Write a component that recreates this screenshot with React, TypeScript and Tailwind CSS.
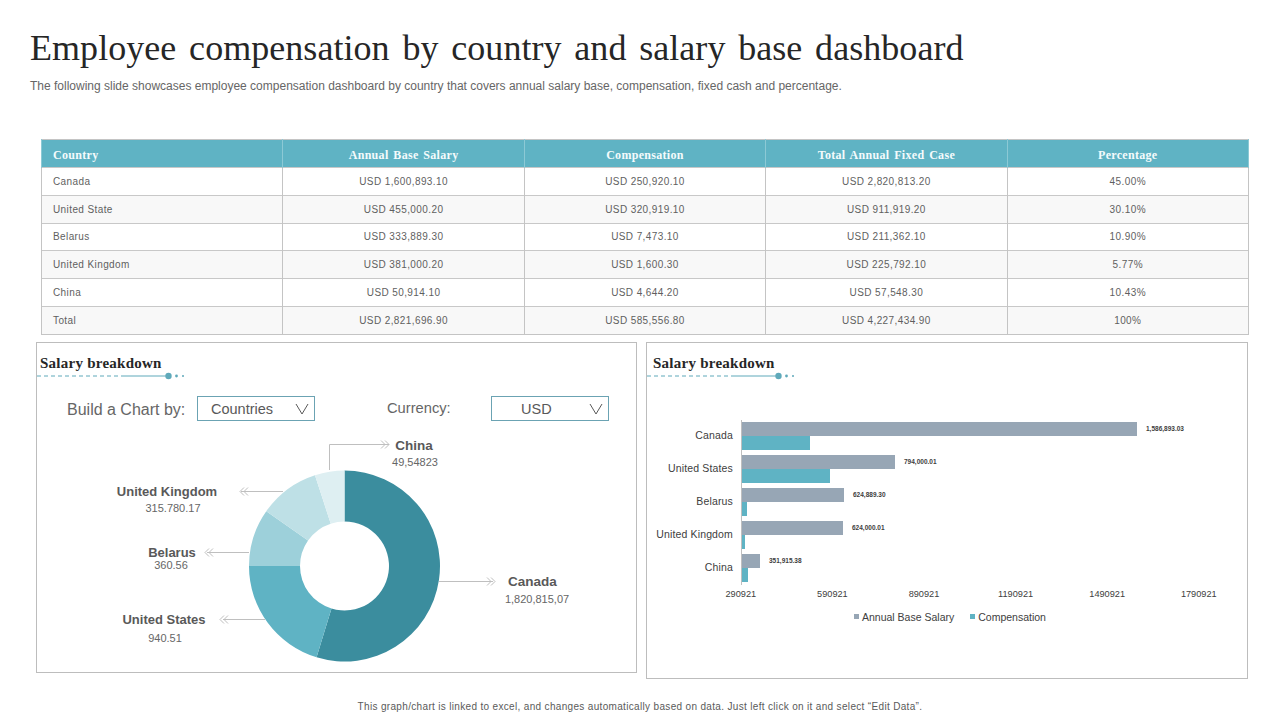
const rows = [
  ["Canada", "USD 1,600,893.10", "USD 250,920.10", "USD 2,820,813.20", "45.00%"],
  ["United State", "USD 455,000.20", "USD 320,919.10", "USD 911,919.20", "30.10%"],
  ["Belarus", "USD 333,889.30", "USD 7,473.10", "USD 211,362.10", "10.90%"],
  ["United Kingdom", "USD 381,000.20", "USD 1,600.30", "USD 225,792.10", "5.77%"],
  ["China", "USD 50,914.10", "USD 4,644.20", "USD 57,548.30", "10.43%"],
  ["Total", "USD 2,821,696.90", "USD 585,556.80", "USD 4,227,434.90", "100%"],
];
const heads = ["Country", "Annual Base Salary", "Compensation", "Total Annual Fixed Case", "Percentage"];

const bars = [
  { name: "Canada", a: 395, b: 68, v: "1,586,893.03" },
  { name: "United States", a: 153, b: 88, v: "794,000.01" },
  { name: "Belarus", a: 102, b: 5, v: "624,889.30" },
  { name: "United Kingdom", a: 101, b: 3, v: "624,000.01" },
  { name: "China", a: 18, b: 6, v: "351,915.38" },
];
const ticks = ["290921", "590921", "890921", "1190921", "1490921", "1790921"];

function polar(cx: number, cy: number, r: number, deg: number) {
  const a = ((deg - 90) * Math.PI) / 180;
  return [cx + r * Math.cos(a), cy + r * Math.sin(a)];
}
function slice(start: number, end: number) {
  const cx = 307.5, cy = 136, R = 95.5, r = 44.5;
  const [x1, y1] = polar(cx, cy, R, start);
  const [x2, y2] = polar(cx, cy, R, end);
  const [x3, y3] = polar(cx, cy, r, end);
  const [x4, y4] = polar(cx, cy, r, start);
  const large = end - start > 180 ? 1 : 0;
  return `M${x1} ${y1}A${R} ${R} 0 ${large} 1 ${x2} ${y2}L${x3} ${y3}A${r} ${r} 0 ${large} 0 ${x4} ${y4}Z`;
}

function Heading({ indent }: { indent: string }) {
  return (
    <div className="h-[87px]">
      <h2 className={`pt-[11px] h-[29px] text-[15px] leading-[18px] font-bold tracking-[0.25px] text-[#262626] font-['Liberation_Serif',serif] ${indent}`}>
        Salary breakdown
      </h2>
      <svg width="150" height="8" className="block">
        <path d="M0 4H88" stroke="#5fa9ba" strokeWidth="1" strokeDasharray="4 3" />
        <path d="M88 4H130" stroke="#5fa9ba" strokeWidth="1" />
        <circle cx="131.5" cy="4" r="3.2" fill="#5fa9ba" />
        <circle cx="139.5" cy="4" r="1.4" fill="#5fa9ba" />
        <circle cx="146" cy="4" r="1" fill="#5fa9ba" />
      </svg>
    </div>
  );
}

function Select({ label, cls }: { label: string; cls: string }) {
  return (
    <div className="relative w-[118px] h-[25px] border border-[#6ba3b3]">
      <span className={`absolute top-[2px] text-[14.5px] leading-[20px] text-[#595959] ${cls}`}>{label}</span>
      <svg width="14" height="12" className="absolute left-[97px] top-[6px]">
        <path d="M1 1L7 11L13 1" fill="none" stroke="#595959" strokeWidth="1" />
      </svg>
    </div>
  );
}

export default function App() {
  return (
    <div className="relative w-[1280px] h-[720px] overflow-hidden bg-white font-['Liberation_Sans',Arial,sans-serif]">
      <div className="pl-[30px] pt-[27px]">
        <h1 className="text-[36px] leading-[42px] text-[#262626] tracking-[0.05px] [word-spacing:3.7px] font-['Liberation_Serif',serif]">
          Employee compensation by country and salary base dashboard
        </h1>
        <p className="mt-[9px] text-[12px] leading-[16px] text-[#666666]">
          The following slide showcases employee compensation dashboard by country that covers annual salary base, compensation, fixed cash and percentage.
        </p>
      </div>

      <table className="ml-[41px] mt-[45px] w-[1208px] table-fixed border-collapse border border-[#c4c4c4]">
        <thead>
          <tr className="h-[28px] bg-[#5fb3c4]">
            {heads.map((h, i) => (
              <th
                key={h}
                className={`border-x border-[#8cc9d5] pt-[2px] text-[12px] font-bold text-[#f4fbfc] tracking-[0.3px] [word-spacing:1.5px] font-['Liberation_Serif',serif] ${i === 0 ? "text-left pl-[11px]" : "text-center"}`}
              >
                {h}
              </th>
            ))}
          </tr>
        </thead>
        <tbody>
          {rows.map((r, ri) => (
            <tr key={r[0]} className={`h-[27.8px] border-t border-[#c8c8c8] ${ri % 2 === 1 ? "bg-[#f8f8f8]" : "bg-white"}`}>
              {r.map((c, i) => (
                <td
                  key={i}
                  className={`border-x border-[#c4c4c4] text-[10px] tracking-[0.4px] text-[#5f5f5f] ${i === 0 ? "text-left pl-[11px]" : "text-center"}`}
                >
                  {c}
                </td>
              ))}
            </tr>
          ))}
        </tbody>
      </table>

      <div className="flex items-start gap-[9px] ml-[36px] mt-[7px]">
        <section className="w-[601px] h-[331px] border border-[#bdbdbd]">
          <Heading indent="pl-[3px]" />
          <div className="relative h-[241px]">
            <div className="absolute left-0 right-0 top-[-34px] flex items-center">
              <span className="ml-[30px] w-[130px] text-[16px] leading-[20px] text-[#666666] translate-y-[2px]">Build a Chart by:</span>
              <Select label="Countries" cls="left-[13px]" />
              <span className="ml-[72px] w-[104px] text-[14.7px] leading-[20px] text-[#666666]">Currency:</span>
              <Select label="USD" cls="left-[29px]" />
            </div>
            <svg width="600" height="241" className="absolute left-0 top-0">
              <path d={slice(0, 197)} fill="#3b8d9e" />
              <path d={slice(197, 270)} fill="#5fb3c4" />
              <path d={slice(270, 305)} fill="#9dd0da" />
              <path d={slice(305, 342)} fill="#bee0e6" />
              <path d={slice(342, 360)} fill="#deeff2" />
              <g fill="none" stroke="#bfbfbf" strokeWidth="1">
                <path d="M292.5 40V14.5H352" />
                <path d="M348 10.5L352 14.5L348 18.5M344 10.5L348 14.5L344 18.5" />
                <path d="M246 61.5H204" />
                <path d="M207 57.5L203 61.5L207 65.5M211 57.5L207 61.5L211 65.5" />
                <path d="M212 122.5H170" />
                <path d="M172 118.5L168 122.5L172 126.5M176 118.5L172 122.5L176 126.5" />
                <path d="M228 189.5H186" />
                <path d="M187 185.5L183 189.5L187 193.5M191 185.5L187 189.5L191 193.5" />
                <path d="M402 151.5H456" />
                <path d="M454 147.5L458 151.5L454 155.5M450 147.5L454 151.5L450 155.5" />
              </g>
            </svg>
            <span className="absolute left-[377px] top-[7px] -translate-x-1/2 text-[13.5px] leading-[18px] font-bold text-[#595959]">China</span>
            <span className="absolute left-[378px] top-[25px] -translate-x-1/2 text-[11px] leading-[14px] text-[#666666]">49,54823</span>
            <span className="absolute left-[130px] top-[53px] -translate-x-1/2 whitespace-nowrap text-[13px] leading-[18px] font-bold text-[#595959]">United Kingdom</span>
            <span className="absolute left-[136px] top-[71px] -translate-x-1/2 text-[11px] leading-[14px] text-[#666666]">315.780.17</span>
            <span className="absolute left-[135px] top-[114px] -translate-x-1/2 text-[13px] leading-[18px] font-bold text-[#595959]">Belarus</span>
            <span className="absolute left-[134px] top-[128px] -translate-x-1/2 text-[11px] leading-[14px] text-[#666666]">360.56</span>
            <span className="absolute left-[127px] top-[181px] -translate-x-1/2 whitespace-nowrap text-[13px] leading-[18px] font-bold text-[#595959]">United States</span>
            <span className="absolute left-[128px] top-[201px] -translate-x-1/2 text-[11px] leading-[14px] text-[#666666]">940.51</span>
            <span className="absolute left-[495.5px] top-[143px] -translate-x-1/2 text-[13.5px] leading-[18px] font-bold text-[#595959]">Canada</span>
            <span className="absolute left-[500px] top-[162px] -translate-x-1/2 whitespace-nowrap text-[11px] leading-[14px] text-[#666666]">1,820,815,07</span>
          </div>
        </section>

        <section className="w-[602px] h-[337px] border border-[#bdbdbd]">
          <Heading indent="pl-[6px]" />
          <div className="mt-[-10px]">
            <div className="ml-[9px] flex flex-col">
              {bars.map((b) => (
                <div key={b.name} className="flex h-[33px] items-center">
                  <span className="w-[77px] text-right text-[10.5px] tracking-[0.15px] text-[#404040] whitespace-nowrap">{b.name}</span>
                  <div className="ml-[8px] h-[33px] border-l border-[#bfbfbf] flex flex-col justify-center">
                    <div className="flex items-center h-[14px]">
                      <div className="h-[14px] bg-[#97a6b5]" style={{ width: b.a }} />
                      <span className="ml-[9px] text-[6.5px] font-bold text-[#404040] whitespace-nowrap">{b.v}</span>
                    </div>
                    <div className="h-[14px] bg-[#5fb3c4]" style={{ width: b.b }} />
                  </div>
                </div>
              ))}
            </div>
            <div className="ml-[48px] mt-[2px] grid grid-cols-[repeat(6,91.6px)]">
              {ticks.map((t) => (
                <span key={t} className="text-center text-[9.2px] leading-[14px] text-[#404040]">{t}</span>
              ))}
            </div>
            <div className="ml-[207px] mt-[9px] flex items-center text-[10.5px] leading-[14px] text-[#404040]">
              <span className="w-[5px] h-[5px] bg-[#97a6b5] mr-[3px]" />
              <span>Annual Base Salary</span>
              <span className="w-[5px] h-[5px] bg-[#5fb3c4] ml-[16px] mr-[3px]" />
              <span>Compensation</span>
            </div>
          </div>
        </section>
      </div>

      <p className="absolute left-0 right-0 top-[700px] text-center text-[10px] leading-[14px] tracking-[0.33px] text-[#5a5a5a]">
        This graph/chart is linked to excel, and changes automatically based on data. Just left click on it and select “Edit Data”.
      </p>
    </div>
  );
}
